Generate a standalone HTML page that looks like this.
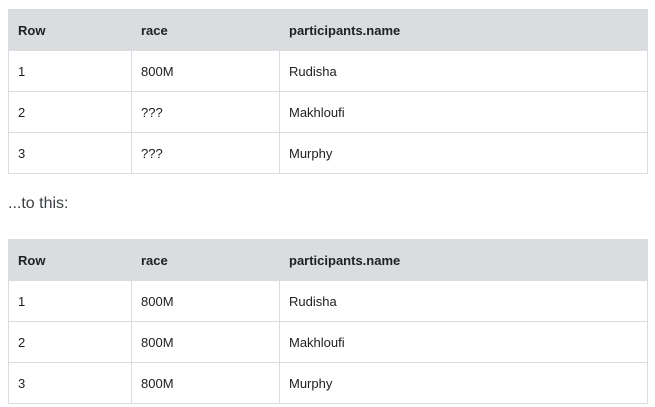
<!DOCTYPE html>
<html><head><style>
body{margin:0;background:#fff;font-family:"Liberation Sans",sans-serif;color:#202124;}
table{position:absolute;left:8px;width:640px;border-collapse:collapse;font-size:13px;}
td,th{border:1px solid #dadce0;height:41px;padding:0 0 0 9px;text-align:left;box-sizing:border-box;}
th{background:#dadce0;font-weight:bold;height:41px;}
.c1{width:123px}.c2{width:148px}
p{position:absolute;left:8px;top:195px;margin:0;font-size:16px;color:#3c4043;}
</style></head><body>
<table style="top:9px">
<tr><th class="c1">Row</th><th class="c2">race</th><th>participants.name</th></tr>
<tr><td>1</td><td>800M</td><td>Rudisha</td></tr>
<tr><td>2</td><td>???</td><td>Makhloufi</td></tr>
<tr><td>3</td><td>???</td><td>Murphy</td></tr>
</table>
<p>...to this:</p>
<table style="top:239px">
<tr><th class="c1">Row</th><th class="c2">race</th><th>participants.name</th></tr>
<tr><td>1</td><td>800M</td><td>Rudisha</td></tr>
<tr><td>2</td><td>800M</td><td>Makhloufi</td></tr>
<tr><td>3</td><td>800M</td><td>Murphy</td></tr>
</table>
</body></html>
